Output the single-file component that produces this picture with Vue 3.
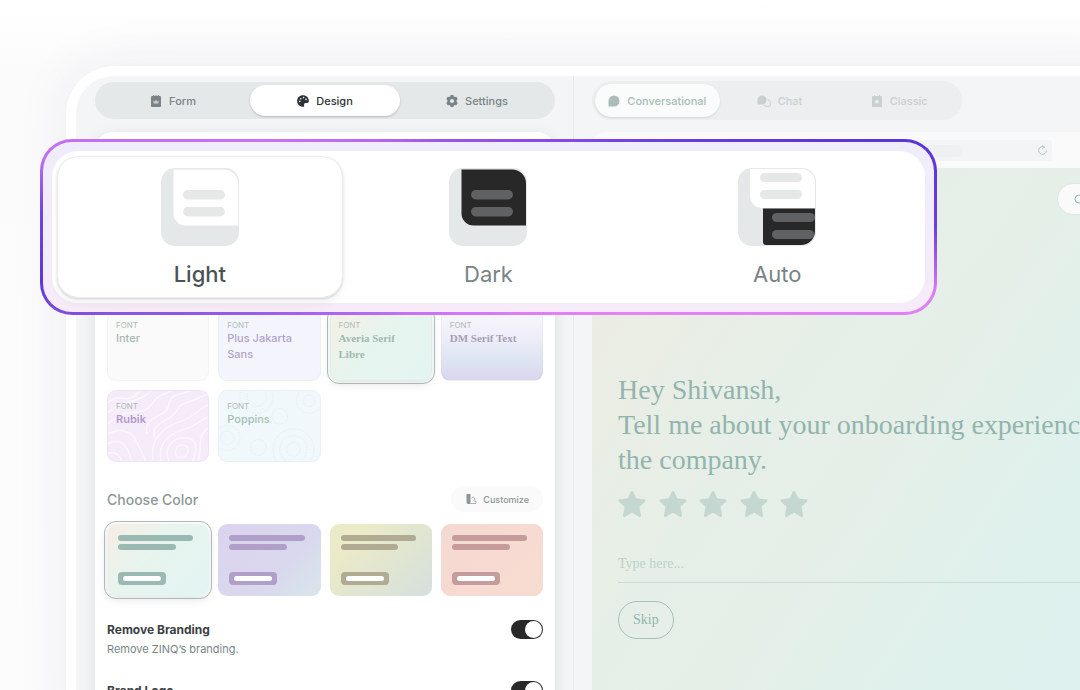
<script setup>
import { ref } from 'vue'

const panel = ref('Design')
const panels = ['Form', 'Design', 'Settings']
const view = ref('Conversational')
const views = ['Conversational', 'Chat', 'Classic']
const mode = ref('Light')
const modes = ['Light', 'Dark', 'Auto']

const font = ref('averia')
const fonts = [
  { id: 'inter', name: 'Inter' },
  { id: 'jakarta', name: 'Plus Jakarta Sans' },
  { id: 'averia', name: 'Averia Serif Libre' },
  { id: 'dm', name: 'DM Serif Text' },
  { id: 'rubik', name: 'Rubik' },
  { id: 'poppins', name: 'Poppins' }
]

const color = ref('mint')
const colors = ['mint', 'lilac', 'olive', 'rose']

const settings = ref([
  { id: 'branding', title: 'Remove Branding', text: 'Remove ZINQ’s branding.', on: true },
  { id: 'logo', title: 'Brand Logo', text: 'Show your own logo.', on: true }
])
const answer = ref('')
</script>

<template>
  <div class="stage">
    <div class="device">
      <section class="editor">
        <nav class="tabs">
          <button v-for="p in panels" :key="p" type="button" class="tab" :class="{ active: panel === p }" @click="panel = p">
            <svg v-if="p === 'Form'" viewBox="0 0 12 12" class="icon">
              <path fill="currentColor" d="M2 1h1V0h1v1h1.500V0h1v1H8V0h1v1h1a1 1 0 0 1 1 1v9a1 1 0 0 1-1 1H2a1 1 0 0 1-1-1V2a1 1 0 0 1 1-1z" />
              <path fill="#c5cbcc" d="M3.500 8.500V5.500l1.300 1L6 4.800l1.200 1.700 1.300-1v3z" />
            </svg>
            <svg v-else-if="p === 'Design'" viewBox="0 0 12 12" class="icon">
              <path fill="currentColor" d="M6 .2C2.700.2.100 2.800.100 6S2.700 11.800 6 11.800c1 0 1.500-.8 1.200-1.600-.5-1.200.2-2.200 1.400-2.200H10c1.200 0 1.900-.8 1.900-2C11.900 2.600 9.200.2 6 .2z" />
              <g fill="#fff"><circle cx="2.700" cy="6.400" r=".8" /><circle cx="3.800" cy="3.700" r=".8" /><circle cx="6.600" cy="2.600" r=".8" /><circle cx="9.100" cy="4.400" r=".8" /></g>
            </svg>
            <svg v-else viewBox="0 0 12 12" class="icon">
              <path fill="currentColor" fill-rule="evenodd" d="M4.600 0h2.800l.4 1.500 1 .6 1.500-.4 1.400 2.400L10.600 5.200v1.600l1.100 1.100-1.400 2.400-1.500-.4-1 .6L7.400 12H4.600l-.4-1.500-1-.6-1.500.4L.3 7.900l1.100-1.100V5.200L.3 4.100l1.400-2.400 1.500.4 1-.6zM6 4a2 2 0 1 0 0 4 2 2 0 0 0 0-4z" />
            </svg>
            <span>{{ p }}</span>
          </button>
        </nav>

        <div class="sheet">
          <div class="grid">
            <button v-for="f in fonts" :key="f.id" type="button" class="tile font" :class="[f.id, { chosen: font === f.id }]" @click="font = f.id">
              <svg v-if="f.id === 'rubik'" class="pattern soft" viewBox="0 0 102 72" preserveAspectRatio="none" fill="none" stroke="#fff" stroke-width="1.500">
                <path d="M0 12c12-12 20 4 32-12M0 22C18 8 28 14 44 0M0 34c20-20 34-6 44-20S60 4 64 0M40 44C34 26 60 28 62 14S78 4 82 0M48 48c-8-14 18-18 22-28s18-8 32-18M0 44c16-8 26 0 30 10s8 14 8 18M0 54c14-6 20 2 24 18M0 64c8-2 12 2 14 8M46 72c-4-20 8-34 26-40s20-14 30-18M54 72c-4-18 8-28 22-32s18-10 26-14M62 72c-6-14 4-24 16-24s14 10 8 24M70 68c-4-8 2-14 8-12s4 8 0 12zM92 72c4-16-2-26 10-34" />
              </svg>
              <svg v-if="f.id === 'poppins'" class="pattern" viewBox="0 0 102 72" fill="none" stroke="#e1f1f3" stroke-width="1" stroke-dasharray="2 1">
                <circle cx="92" cy="10" r="6" /><circle cx="92" cy="10" r="13" /><circle cx="76" cy="60" r="7" /><circle cx="76" cy="60" r="14" /><circle cx="76" cy="60" r="21" /><circle cx="8" cy="48" r="7" /><circle cx="8" cy="48" r="13" /><circle cx="38" cy="6" r="10" /><circle cx="38" cy="6" r="17" /><circle cx="40" cy="58" r="8" /><circle cx="62" cy="26" r="8" />
              </svg>
              <small>FONT</small>
              <strong>{{ f.name }}</strong>
            </button>
          </div>

          <header class="head">
            <h2>Choose Color</h2>
            <button type="button" class="customize">
              <svg viewBox="0 0 12 12" class="mini">
                <path fill="currentColor" d="M1.500 1h4v8.500a2 2 0 0 1-2 1.500 2 2 0 0 1-2-1.500z" />
                <path fill="none" stroke="currentColor" stroke-opacity=".7" d="M6.500 5.200l1.800-1.400 1.600 2.400-1.600 1.600M4 10.500h7V8H9" />
              </svg>
              <span>Customize</span>
            </button>
          </header>

          <div class="grid">
            <button v-for="c in colors" :key="c" type="button" class="tile swatch" :class="[c, { chosen: color === c }]" :aria-label="c" @click="color = c">
              <i class="bar long"></i>
              <i class="bar short"></i>
              <i class="cta"></i>
            </button>
          </div>

          <div class="settings">
            <div v-for="s in settings" :key="s.id" class="setting">
              <label :for="s.id">
                <b>{{ s.title }}</b>
                <span>{{ s.text }}</span>
              </label>
              <input :id="s.id" v-model="s.on" type="checkbox" class="switch" />
            </div>
          </div>
        </div>
      </section>

      <section class="preview">
        <nav class="tabs faded">
          <button v-for="v in views" :key="v" type="button" class="tab" :class="{ active: view === v }" @click="view = v">
            <svg v-if="v === 'Conversational'" viewBox="0 0 12 12" class="icon">
              <path fill="currentColor" d="M6 .5A5.500 5.500 0 1 1 6 11.500H1a.6.6 0 0 1-.5-.6V6A5.500 5.500 0 0 1 6 .5z" />
            </svg>
            <svg v-else-if="v === 'Chat'" viewBox="0 0 14 12" class="icon wide">
              <path fill="currentColor" d="M5 .5a4.500 4.500 0 1 1 0 9H1a.5.5 0 0 1-.5-.5V5A4.500 4.500 0 0 1 5 .5z" />
              <path fill="none" stroke="currentColor" d="M10.500 4.500c1.800.4 2.800 1.800 2.800 3.500v3.300H9.800c-1.400 0-2.600-.5-3.300-1.500" />
            </svg>
            <svg v-else viewBox="0 0 12 12" class="icon">
              <path fill="currentColor" d="M2 1h1V0h1v1h4V0h1v1h1a1 1 0 0 1 1 1v9a1 1 0 0 1-1 1H2a1 1 0 0 1-1-1V2a1 1 0 0 1 1-1z" />
              <path fill="#eceeee" d="M6 4l.8 1.400 1.600.4-1.100 1.200.2 1.600L6 8l-1.500.6.2-1.600-1.100-1.200 1.600-.4z" />
            </svg>
            <span>{{ v }}</span>
          </button>
        </nav>

        <div class="browser">
          <div class="chrome">
            <div class="address">
              <span class="url"></span>
              <button type="button" class="reload" aria-label="Reload">
                <svg viewBox="0 0 12 12" fill="none" stroke="currentColor"><path d="M8.500 2.600A4.200 4.200 0 1 0 10.200 6M5.800 .4l2.200 1.900-2.200 1.900" /></svg>
              </button>
            </div>
          </div>
          <div class="page">
            <div class="tools">
              <button type="button" class="search" aria-label="Search">
                <svg viewBox="0 0 12 12" fill="none" stroke="currentColor"><circle cx="5" cy="6" r="4" /><path d="M8 9l3 3" /></svg>
              </button>
            </div>
            <h1>Hey Shivansh,<br />Tell me about your onboarding experience at<br />the company.</h1>
            <div class="stars">
              <button v-for="n in 5" :key="n" type="button" :aria-label="n + ' stars'">
                <svg viewBox="0 0 28 28">
                  <path fill="currentColor" stroke="currentColor" stroke-width="3" stroke-linejoin="round" d="M14 2.500l3.300 7.200 8.700 1-6.200 5.600 1.800 9.200L14 20.900l-7.600 4.600 1.800-9.200L2 10.700l8.700-1z" />
                </svg>
              </button>
            </div>
            <input v-model="answer" type="text" class="answer" placeholder="Type here..." aria-label="Your answer" />
            <button type="button" class="skip">Skip</button>
          </div>
        </div>
      </section>
    </div>

    <div class="modes">
      <div class="options">
        <button v-for="m in modes" :key="m" type="button" class="option" :class="{ on: mode === m }" @click="mode = m">
          <svg viewBox="0 0 78 78" class="picture">
            <rect width="78" height="78" rx="14" fill="#e4e8e9" />
            <template v-if="m === 'Auto'">
              <path fill="#fff" d="M12 1h51a13.500 13.500 0 0 1 14 13.500V40H24a12 12 0 0 1-12-12z" />
              <path fill="#282828" d="M25 40.500h52V63a14 14 0 0 1-14 14H28a3 3 0 0 1-3-3z" />
              <g fill="#e6e8e8"><rect x="22" y="5" width="42" height="9" rx="4.500" /><rect x="22" y="22" width="42" height="9" rx="4.500" /></g>
              <g fill="#606162"><rect x="34" y="45" width="43" height="9" rx="4.500" /><rect x="34" y="62" width="42" height="9" rx="4.500" /></g>
            </template>
            <template v-else>
              <path :fill="m === 'Dark' ? '#282828' : '#fff'" d="M12.500 1.500H63a14 14 0 0 1 14 14v42H24.500a12 12 0 0 1-12-12z" />
              <g :fill="m === 'Dark' ? '#606162' : '#e6e8e8'"><rect x="22" y="22" width="42" height="9.500" rx="4.700" /><rect x="22" y="39" width="42" height="9.500" rx="4.700" /></g>
            </template>
          </svg>
          <span>{{ m }}</span>
        </button>
      </div>
    </div>
  </div>
</template>

<style>
body {
  margin: 0;
  background: #fff;
}
</style>

<style scoped>
.stage {
  position: relative;
  box-sizing: border-box;
  height: 100vh;
  padding: 66px 0 0 66px;
  overflow: hidden;
  font-family: Inter, "Liberation Sans", sans-serif;
  background: linear-gradient(#fff, #fbfbfc 66px, #fcfcfd);
}

button {
  margin: 0;
  padding: 0;
  border: 0;
  background: none;
  font: inherit;
  color: inherit;
  cursor: pointer;
}

.device {
  box-sizing: border-box;
  display: flex;
  margin-right: -80px;
  min-height: 100vh;
  border: 10px solid #fff;
  border-radius: 48px;
  background: #f3f5f6;
  box-shadow: 0 0 0 1px #f3f3f6, 0 0 56px rgba(40, 40, 80, 0.07);
}

.editor {
  flex: 0 0 460px;
  display: flex;
  flex-direction: column;
  padding: 6px 18px 0 19px;
  border-right: 1px solid #e6e8ea;
}

.tabs {
  box-sizing: border-box;
  display: grid;
  grid-template-columns: repeat(3, 1fr);
  gap: 2px;
  height: 37px;
  padding: 3px;
  border-radius: 20px;
  background: #e4e8e8;
  font-size: 11px;
  font-weight: 500;
  color: #798385;
}

.tab {
  display: flex;
  align-items: center;
  justify-content: center;
  gap: 7px;
  border-radius: 18px;
}

.tab.active {
  background: #fff;
  color: #2c3335;
  box-shadow: 0 1px 2px rgba(60, 90, 80, 0.3);
}

.icon {
  width: 12px;
  height: 12px;
}

.icon.wide {
  width: 14px;
}

.sheet {
  flex: 1;
  margin-top: 13px;
  padding: 177px 12px 0;
  border-radius: 18px 18px 0 0;
  background: #fff;
  box-shadow: 0 4px 16px rgba(40, 50, 60, 0.1);
}

.grid {
  display: grid;
  grid-template-columns: repeat(4, 1fr);
  gap: 9px;
}

.tile {
  box-sizing: border-box;
  position: relative;
  height: 72px;
  border-radius: 9px;
  text-align: left;
}

.tile.chosen {
  outline: 1px solid #acb9b8;
  outline-offset: 2px;
  box-shadow: 0 3px 10px rgba(40, 60, 60, 0.14);
}

.font {
  display: flex;
  flex-direction: column;
  padding: 10px 8px;
  border: 1px solid rgba(120, 140, 150, 0.06);
  overflow: hidden;
  font-size: 11px;
  line-height: 16px;
  color: #a9b7b4;
}

.font small {
  position: relative;
  font-size: 8px;
  line-height: 10px;
  color: #afbab8;
}

.font strong {
  position: relative;
  font-weight: 500;
}

.pattern {
  position: absolute;
  inset: 0;
  width: 100%;
  height: 100%;
}

.pattern.soft {
  opacity: 0.6;
}

.inter { background: #fafafa; }
.jakarta { background: #f4f5fc; color: #b2a2cc; }
.averia { background: linear-gradient(135deg, #f5efe4, #e7f4ee 45%, #e3f5f1); color: #9fbab3; }
.dm { background: linear-gradient(#f8f5fd, #f0eff9 35%, #dde5f2 72%, #dad6ee); color: #a79fb5; }
.rubik { background: #f6ebf9; color: #b19bcb; }
.poppins { background: #f1f8fb; color: #a5beb6; }

.rubik strong {
  font-weight: 600;
}

.averia strong,
.dm strong {
  font-family: "Liberation Serif", serif;
  font-weight: 700;
}

.head {
  display: flex;
  align-items: center;
  justify-content: space-between;
  margin: 24px 0 12px;
}

.head h2 {
  margin: 0;
  font-size: 14px;
  font-weight: 500;
  color: #8c9798;
}

.customize {
  display: flex;
  align-items: center;
  gap: 6px;
  height: 26px;
  padding: 0 14px;
  border-radius: 13px;
  background: #fafafa;
  font-size: 9px;
  font-weight: 500;
  color: #8b9697;
}

.mini {
  width: 12px;
  height: 12px;
}

.swatch {
  display: flex;
  flex-direction: column;
  align-items: flex-start;
  gap: 3px;
  padding: 11px;
}

.bar {
  height: 6px;
  border-radius: 3px;
  background: currentColor;
}

.long { width: 94%; }
.short { width: 72%; }

.cta {
  box-sizing: border-box;
  width: 48px;
  height: 13px;
  margin-top: 19px;
  border: 4px solid currentColor;
  border-width: 4px 5px;
  border-radius: 4px;
  background: currentColor;
  display: flex;
}

.cta::before {
  content: "";
  flex: 1;
  border-radius: 3px;
  background: #fff;
}

.mint { background: linear-gradient(135deg, #f5eee5, #e7f4ee 45%, #e2f5f2); color: #9ab9b3; }
.lilac { background: linear-gradient(135deg, #dcd3ef, #d9d8ed 60%, #d8e6ec); color: #b09fc8; }
.olive { background: linear-gradient(135deg, #ecebc8 20%, #e1e6d0 55%, #d4e0df); color: #b1ab94; }
.rose { background: linear-gradient(135deg, #f3dacf, #f7dad2 50%, #f6ddcf); color: #c69b9c; }

.settings {
  display: grid;
  gap: 23px;
  margin-top: 24px;
}

.setting {
  display: flex;
  align-items: flex-start;
  justify-content: space-between;
}

.setting label {
  display: grid;
  font-size: 11px;
  line-height: 18px;
  color: #788486;
}

.setting b {
  font-size: 12px;
  font-weight: 700;
  line-height: 20px;
  color: #3a4042;
}

.switch {
  appearance: none;
  display: flex;
  width: 32px;
  height: 19px;
  margin: 0;
  padding: 1px;
  box-sizing: border-box;
  border-radius: 10px;
  background: #a9b0b2;
}

.switch::before {
  content: "";
  width: 17px;
  height: 17px;
  border-radius: 50%;
  background: #fff;
}

.switch:checked {
  justify-content: flex-end;
  background: #292929;
}

.preview {
  flex: 1;
  min-width: 0;
  display: flex;
  flex-direction: column;
  padding: 5px 0 0 18px;
}

.faded {
  grid-template-columns: 125fr 120fr 120fr;
  width: 370px;
  height: 39px;
  gap: 0;
  background: #eceeef;
  color: #c9d1cf;
}

.faded .active {
  background: #fafbfb;
  color: #a9bcb8;
  box-shadow: 0 1px 2px rgba(100, 130, 120, 0.2);
}

.browser {
  flex: 1;
  display: flex;
  flex-direction: column;
  margin-top: 12px;
  border-radius: 14px 0 0 0;
  overflow: hidden;
  background: #fafafa;
}

.chrome {
  padding: 8px 98px 7px 100px;
}

.address {
  display: flex;
  align-items: center;
  justify-content: space-between;
  height: 21px;
  padding: 0 4px 0 150px;
  border-radius: 3px;
  background: #f3f4f5;
}

.url {
  width: 121px;
  height: 12px;
  border-radius: 6px;
  background: #eff0f1;
}

.reload {
  display: flex;
  width: 11px;
  height: 11px;
  color: #b0bebb;
}

.page {
  flex: 1;
  padding: 15px 21px 40px 26px;
  background: linear-gradient(125deg, #eeece2, #e6efe7 35%, #e5efe8 50%, #def1ed 75%, #dff1ee);
  font-family: "Liberation Serif", serif;
  color: #93b4ae;
}

.tools {
  display: flex;
  justify-content: flex-end;
}

.search {
  display: flex;
  align-items: center;
  width: 72px;
  height: 32px;
  padding: 0 16px;
  border: 1px solid #dfe5e2;
  border-radius: 16px;
  background: #fafafa;
}

.search svg {
  width: 12px;
  height: 12px;
}

h1 {
  margin: 157px 0 0;
  font-size: 28px;
  font-weight: 400;
  line-height: 35px;
  white-space: nowrap;
}

.stars {
  display: flex;
  justify-content: space-between;
  width: 190px;
  margin-top: 13px;
  color: #c4d8d1;
}

.stars button {
  display: flex;
  width: 28px;
  height: 28px;
}

.answer {
  display: block;
  box-sizing: border-box;
  width: 100%;
  height: 38px;
  margin-top: 27px;
  padding: 0;
  border: 0;
  border-bottom: 1px solid #c9dad7;
  background: none;
  font: inherit;
  font-size: 14px;
  color: inherit;
  outline: none;
}

.answer::placeholder {
  color: #bfd0ca;
  opacity: 1;
}

.skip {
  height: 38px;
  margin-top: 18px;
  padding: 0 14px;
  border: 1px solid #a5c0bc;
  border-radius: 19px;
  font-size: 14px;
}

.modes {
  position: absolute;
  top: 139px;
  left: 40px;
  right: 143px;
  box-sizing: border-box;
  padding: 9px;
  border: 3px solid transparent;
  border-radius: 32px;
  background:
    linear-gradient(#efedfb, #f7ebf8) padding-box,
    conic-gradient(#9450e8, #8048e6 47deg, #5b33d9 79deg, #6a3fde 90deg, #e07ff6 99deg, #e583f7 120deg, #d077f6 200deg, #c46ff5 225deg, #a862f2 244deg, #8555e3 257deg, #5f36da 263deg, #6f45e0 272deg, #c26ef3 279deg, #cb70f5 291deg, #9a55ec 330deg, #9450e8) border-box;
}

.options {
  display: grid;
  grid-template-columns: repeat(3, 1fr);
  gap: 5px;
  padding: 6px;
  border-radius: 26px;
  background: #fff;
}

.option {
  display: flex;
  flex-direction: column;
  align-items: center;
  gap: 14px;
  padding: 11px 0 8px;
  border-radius: 20px;
  font-size: 22px;
  line-height: 29px;
  color: #788486;
}

.option.on {
  font-weight: 500;
  color: #4a5355;
  box-shadow: 0 0 0 1px #eceeee, 0 1px 3px rgba(50, 65, 60, 0.35), 0 6px 10px rgba(50, 65, 60, 0.07);
}

.picture {
  width: 78px;
  height: 78px;
}
</style>
